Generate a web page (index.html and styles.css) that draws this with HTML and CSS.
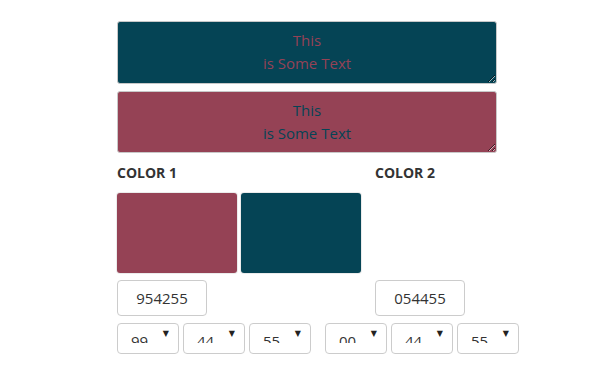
FILE: index.html
```html
<!DOCTYPE html>
<html lang="en">
<head>
    <meta charset="UTF-8">
    <title>Color Mixer</title>
    <link rel="stylesheet" href="styles.css">
</head>
<body>
    <div class="wrap">
        <textarea class="sample sample-one">This
is Some Text</textarea>
        <textarea class="sample sample-two">This
is Some Text</textarea>

        <div class="columns">
            <div class="col col-one">
                <h4>COLOR 1</h4>
                <div class="swatches">
                    <div class="swatch rose"></div>
                    <div class="swatch teal"></div>
                </div>
                <input type="text" class="hex" value="954255">
            </div>
            <div class="col col-two">
                <h4>COLOR 2</h4>
                <div class="swatches"></div>
                <input type="text" class="hex" value="054455">
            </div>
        </div>

        <div class="selects">
            <div class="pick"><span>99</span></div>
            <div class="pick"><span>44</span></div>
            <div class="pick"><span>55</span></div>
            <div class="pick gap"><span>00</span></div>
            <div class="pick"><span>44</span></div>
            <div class="pick"><span>55</span></div>
        </div>
    </div>
</body>
</html>
```

FILE: styles.css
```css
/* General */
body {
    margin: 0;
    font-family: 'Open Sans', sans-serif;
    color: #333;
    background: #fff;
}

.wrap {
    padding: 21px 0 0 117px;
}

/* Text samples */
.sample {
    display: block;
    box-sizing: border-box;
    width: 380px;
    height: 63px;
    margin: 0 0 7px;
    padding: 7px 10px;
    border: 1px solid #c8c8c8;
    border-radius: 3px;
    font-family: 'Open Sans', sans-serif;
    font-size: 15px;
    line-height: 23px;
    text-align: center;
    resize: vertical;
    overflow: hidden;
}

.sample-one {
    background: #054455;
    color: #954255;
}

.sample-two {
    background: #954255;
    color: #054455;
    height: 62px;
}

/* Columns */
.columns {
    display: flex;
}

.col h4 {
    margin: 3px 0 10px;
    font-size: 14px;
    font-weight: 700;
    line-height: 20px;
    color: #333;
}

.col-one {
    width: 258px;
}

.swatches {
    display: flex;
    gap: 4px;
    height: 80px;
    margin-bottom: 7px;
}

.swatch {
    width: 120px;
    border-radius: 3px;
    box-shadow: 0 0 0 1px rgba(0, 0, 0, 0.08);
}

.rose { background: #954255; }
.teal { background: #054455; }

.hex {
    box-sizing: border-box;
    width: 90px;
    height: 36px;
    padding: 0;
    border: 1px solid #ccc;
    border-radius: 4px;
    font-family: 'Open Sans', sans-serif;
    font-size: 15px;
    color: #333;
    text-align: center;
}

/* Dropdowns */
.selects {
    display: flex;
    gap: 4px;
    margin-top: 7px;
}

.pick {
    position: relative;
    box-sizing: border-box;
    width: 62px;
    height: 31px;
    border: 1px solid #ccc;
    border-radius: 4px;
    font-size: 15px;
    color: #333;
}

.pick span {
    display: block;
    box-sizing: border-box;
    height: 19px;
    padding: 6px 0 0 13px;
    line-height: 22px;
    overflow: hidden;
}

.pick::after {
    content: "▼";
    position: absolute;
    top: 5px;
    right: 9px;
    font-family: 'DejaVu Sans', sans-serif;
    font-size: 8px;
    color: #222;
}

.pick.gap {
    margin-left: 10px;
}
```
